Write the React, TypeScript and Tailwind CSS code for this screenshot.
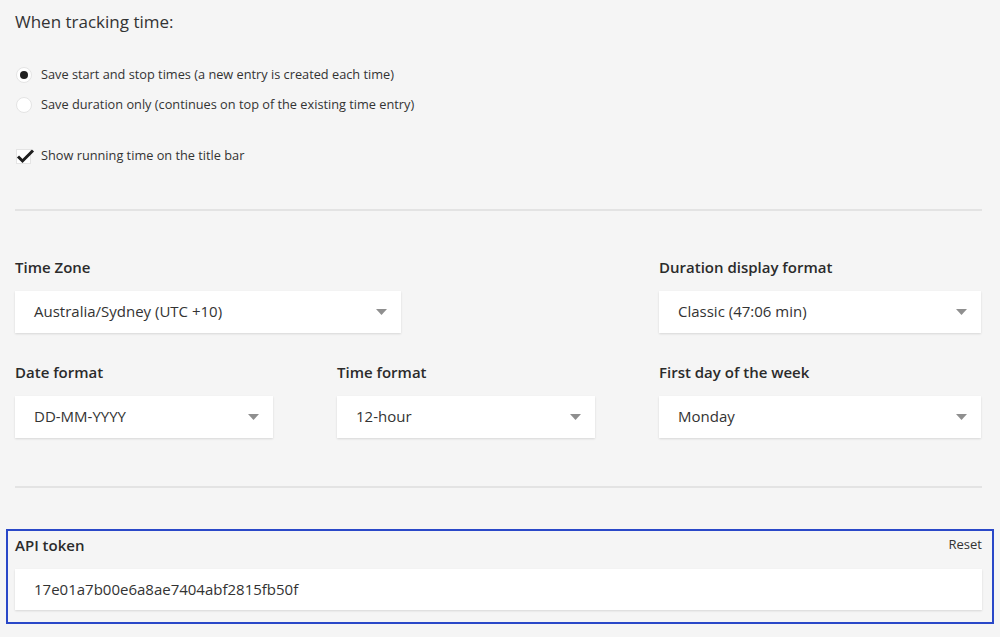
import React from "react";

const font = { fontFamily: '"Open Sans", "Noto Sans", sans-serif' };

function Caret() {
  return (
    <svg width="11" height="6" viewBox="0 0 11 6" className="shrink-0">
      <path d="M0 0h11L5.5 6z" fill="#8f8f8f" />
    </svg>
  );
}

function Select({ value, className }: { value: string; className: string }) {
  return (
    <div
      className={`flex h-[42px] items-center justify-between bg-white pl-[19px] pr-[14px] pb-[1px] text-[15px] text-[#333] shadow-[0_1px_2px_rgba(0,0,0,0.12)] ${className}`}
    >
      <span>{value}</span>
      <Caret />
    </div>
  );
}

function Label({ children }: { children: React.ReactNode }) {
  return <div className="h-5 text-[15px] font-semibold leading-5 text-[#2b2b2b]">{children}</div>;
}

function Radio({ checked, label }: { checked?: boolean; label: string }) {
  return (
    <div className="flex h-5 items-center">
      <span className="ml-[1px] flex h-[16px] w-[16px] items-center justify-center rounded-full border border-[#e4e4e4] bg-white">
        {checked && <span className="h-[8px] w-[8px] rounded-full bg-[#222]" />}
      </span>
      <span className="ml-[9px] text-[12.75px] text-[#333]">{label}</span>
    </div>
  );
}

export default function App() {
  return (
    <div className="min-h-[637px] w-[1000px] bg-[#f5f5f5]" style={font}>
      <div className="flex flex-col px-[15px] pt-[10px]">
        <div className="h-6 text-[17px] leading-6 text-[#333]">When tracking time:</div>

        <div className="mt-[31px] flex flex-col gap-[10px]">
          <Radio checked label="Save start and stop times (a new entry is created each time)" />
          <Radio label="Save duration only (continues on top of the existing time entry)" />
        </div>

        <div className="mt-[31px] flex h-5 items-center">
          <span className="relative ml-[1px] h-[15px] w-[15px] border border-[#e4e4e4] bg-white">
            <svg width="20" height="16" viewBox="0 0 20 16" className="absolute -top-[2px] left-[-1px]">
              <path d="M2 8.5l4.5 4.5L17 2.5" fill="none" stroke="#1e1e1e" strokeWidth="3" />
            </svg>
          </span>
          <span className="ml-[10px] text-[12.75px] text-[#333]">Show running time on the title bar</span>
        </div>

        <div className="mt-[43px] h-[2px] w-[967px] bg-[#e3e3e3]" />

        <div className="mt-[46px] grid grid-cols-[322px_322px_322px]">
          <div className="col-span-2">
            <Label>Time Zone</Label>
            <Select value="Australia/Sydney (UTC +10)" className="mt-[14px] w-[386px]" />
          </div>
          <div>
            <Label>Duration display format</Label>
            <Select value="Classic (47:06 min)" className="mt-[14px] w-[322px]" />
          </div>
          <div className="mt-[29px]">
            <Label>Date format</Label>
            <Select value="DD-MM-YYYY" className="mt-[14px] w-[258px]" />
          </div>
          <div className="mt-[29px]">
            <Label>Time format</Label>
            <Select value="12-hour" className="mt-[14px] w-[258px]" />
          </div>
          <div className="mt-[29px]">
            <Label>First day of the week</Label>
            <Select value="Monday" className="mt-[14px] w-[322px]" />
          </div>
        </div>

        <div className="mt-[48px] h-[2px] w-[967px] bg-[#e3e3e3]" />
      </div>

      <div className="ml-[6px] mt-[41px] w-[988px] border-2 border-[#2a48c8] px-[7px] pb-[12px] pt-[4px]">
        <div className="flex items-center justify-between">
          <Label>API token</Label>
          <span className="mr-[3px] text-[13px] text-[#333]">Reset</span>
        </div>
        <div className="mt-[14px] flex h-[41px] w-[967px] items-center bg-white pl-[19px] text-[15px] text-[#333] shadow-[0_1px_2px_rgba(0,0,0,0.12)]">
          17e01a7b00e6a8ae7404abf2815fb50f
        </div>
      </div>
    </div>
  );
}
